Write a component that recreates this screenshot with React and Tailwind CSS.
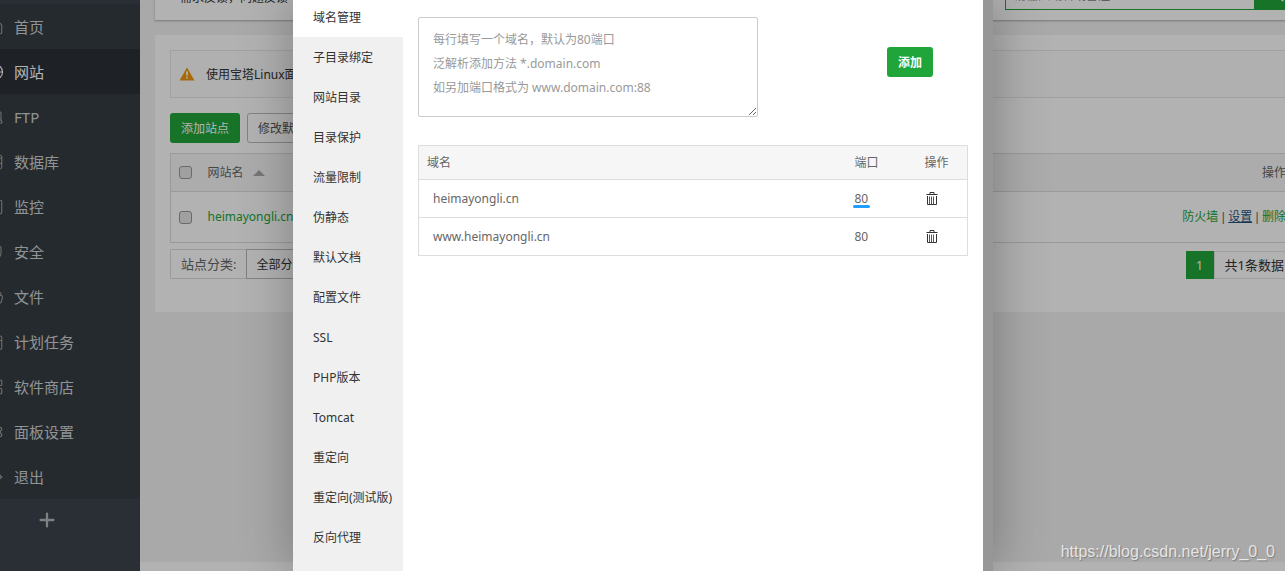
import { House, Globe, Laptop, Database, SquareActivity, Shield, FolderOpen, CalendarDays, LayoutGrid, Settings, LogOut, Plus, Search } from "lucide-react";

const NAV = [
  ["首页", House],
  ["网站", Globe],
  ["FTP", Laptop],
  ["数据库", Database],
  ["监控", SquareActivity],
  ["安全", Shield],
  ["文件", FolderOpen],
  ["计划任务", CalendarDays],
  ["软件商店", LayoutGrid],
  ["面板设置", Settings],
  ["退出", LogOut],
];

const TABS = ["域名管理", "子目录绑定", "网站目录", "目录保护", "流量限制", "伪静态", "默认文档", "配置文件", "SSL", "PHP版本", "Tomcat", "重定向", "重定向(测试版)", "反向代理"];

const DOMAINS = [
  { name: "heimayongli.cn", port: "80", marked: true },
  { name: "www.heimayongli.cn", port: "80", marked: false },
];

function TrashIcon() {
  return (
    <svg width="12" height="14" viewBox="0 0 12 14" fill="none" aria-hidden="true">
      <path d="M4 2.5V.5h4v2M.5 2.5h11M1.5 4v8.5h9V4" stroke="#333" />
      <path d="M3.5 4.5v8M5.5 4.5v8M7.5 4.5v8" stroke="#555" />
    </svg>
  );
}

function WarningIcon() {
  return (
    <svg width="16" height="14" viewBox="0 0 16 14" aria-hidden="true">
      <path d="M8 .5 15.5 13.5H.5z" fill="#f0990f" />
      <path d="M7 4.5h2l-.4 4.5H7.4zM7.2 10h1.6v1.6H7.2z" fill="#fff" />
    </svg>
  );
}

function Divider() {
  return <span className="font-['Liberation_Sans',sans-serif]"> | </span>;
}

function Sidebar() {
  return (
    <aside className="w-[180px] shrink-0 bg-[#3c444d]">
      <div className="h-11" />
      <nav className="bg-[#353d44]">
        {NAV.map(([label, Icon]) => (
          <a
            key={label}
            href="#"
            className={`flex h-[45px] items-center gap-[10px] pl-[26px] text-[15px] ${label === "网站" ? "bg-[#2c3138] text-white" : "text-[#d0d3d6]"}`}
          >
            <Icon size={18} strokeWidth={1.5} className={label === "网站" ? "" : "text-[#9a9da0]"} />
            {label}
          </a>
        ))}
      </nav>
      <button type="button" aria-label="添加菜单" className="flex h-[42px] w-full items-center pl-[76px] text-[#b5b8bb]">
        <Plus size={22} strokeWidth={2.5} />
      </button>
    </aside>
  );
}

function SitePanel() {
  return (
    <main className="flex min-w-0 flex-1 flex-col bg-[#f2f2f2]">
      <div className="mx-[15px] flex h-[60px] items-end justify-between bg-white pb-[10px] pl-[25px] shadow-[0_1px_2px_rgba(0,0,0,0.3)]">
        <p className="pb-1 leading-4">需求反馈，问题反馈</p>
        <form className="flex h-8 w-[305px]">
          <input aria-label="搜索" placeholder="请输入域名或备注" className="w-[250px] border border-[#20a53a] bg-white px-2 pt-1 placeholder:text-[#888]" />
          <button type="button" aria-label="搜索" className="flex flex-1 items-center bg-[#20a53a] pl-3 text-white">
            <Search size={18} />
          </button>
        </form>
      </div>
      <section className="m-[15px] h-[277px] bg-white p-[15px]">
        <div className="flex h-12 items-center gap-[11px] border border-[#e8e8e8] bg-[#fcfcfc] px-2">
          <WarningIcon />
          <span className="pt-[2px]">使用宝塔Linux面板创建站点时会自动创建权限</span>
        </div>
        <div className="mt-[15px] flex h-[30px] gap-[7px]">
          <button type="button" className="rounded-[3px] bg-[#20a53a] px-[11px] pt-[2px] text-white">添加站点</button>
          <button type="button" className="rounded-[3px] border border-[#bbb] px-[10px] pt-[2px] text-[#555]">修改默认页</button>
        </div>
        <table className="mt-[10px] w-full border-collapse text-left text-[#666]">
          <thead>
            <tr className="h-[38px] border border-[#ddd] bg-[#f6f6f6]">
              <th className="w-[37px] pl-2 font-normal">
                <input type="checkbox" aria-label="全选" className="block h-[13px] w-[13px] appearance-none rounded-[3px] border border-[#999] bg-[#e6e6e6]" />
              </th>
              <th className="font-normal">
                <span className="flex items-center gap-[9px]">
                  网站名
                  <svg width="12" height="6" viewBox="0 0 12 6" aria-hidden="true"><path d="M6 0l6 6H0z" fill="#aaa" /></svg>
                </span>
              </th>
              <th className="w-[120px] pr-2 text-right font-normal">操作</th>
            </tr>
          </thead>
          <tbody>
            <tr className="h-[51px] border border-[#ddd]">
              <td className="pl-2">
                <input type="checkbox" aria-label="heimayongli.cn" className="block h-[13px] w-[13px] appearance-none rounded-[3px] border border-[#999] bg-[#e6e6e6]" />
              </td>
              <td><a href="#" className="text-[#20a53a]">heimayongli.cn</a></td>
              <td className="pr-2 text-right whitespace-nowrap">
                <a href="#" className="text-[#20a53a]">防火墙</a>
                <Divider />
                <a href="#" className="text-[#23527c] underline">设置</a>
                <Divider />
                <a href="#" className="text-[#20a53a]">删除</a>
              </td>
            </tr>
          </tbody>
        </table>
        <div className="mt-[6px] flex items-start justify-between">
          <div className="flex h-[30px] items-stretch">
            <label htmlFor="category" className="flex items-center border border-r-0 border-[#ddd] px-[10px] text-[13px] text-[#666]">站点分类:</label>
            <select id="category" className="w-[110px] appearance-none border border-[#bbb] bg-white px-[9px] pt-[2px]">
              <option>全部分类</option>
            </select>
          </div>
          <div className="mt-[2px] flex h-7 text-[13px]">
            <span className="flex w-7 items-center justify-center bg-[#20a53a] text-white">1</span>
            <span className="flex items-center border border-[#e4e4e4] px-[10px]">共1条数据</span>
          </div>
        </div>
      </section>
      <footer className="mt-auto h-[9px] bg-white" />
    </main>
  );
}

function SiteDialog() {
  return (
    <div role="dialog" aria-label="站点设置" className="flex w-[700px] bg-[#979797] pr-[10px] shadow-[1px_1px_50px_rgba(0,0,0,0.3)]">
      <div className="-mt-[3px] w-[110px] shrink-0 bg-[#f0f0f0]">
        {TABS.map((tab, i) => (
          <button
            key={tab}
            type="button"
            className={`block h-10 w-full pt-[2px] pl-5 text-left whitespace-nowrap text-[#333] ${i === 0 ? "bg-white" : ""}`}
          >
            {tab}
          </button>
        ))}
      </div>
      <div className="flex-1 bg-white px-[15px] pt-[17px]">
        <div className="flex items-start justify-between pr-[35px]">
          <textarea
            aria-label="域名"
            className="block h-[100px] w-[340px] rounded-[2px] border border-[#ccc] px-[14px] py-[10px] leading-6 placeholder:text-[#999]"
            placeholder={"每行填写一个域名，默认为80端口\n泛解析添加方法 *.domain.com\n如另加端口格式为 www.domain.com:88"}
          />
          <button type="button" className="mt-[30px] h-[30px] w-[46px] rounded-[3px] bg-[#20a53a] pt-[2px] font-bold text-white">添加</button>
        </div>
        <table className="mt-7 w-full table-fixed border-collapse border border-[#ddd] text-left text-[#666]">
          <thead>
            <tr className="h-[34px] bg-[#f6f6f6]">
              <th className="pl-2 font-normal">域名</th>
              <th className="w-[70px] font-normal">端口</th>
              <th className="w-[43px] font-normal">操作</th>
            </tr>
          </thead>
          <tbody>
            {DOMAINS.map((d) => (
              <tr key={d.name} className="h-[38px] border-t border-[#ddd]">
                <td className="pl-[14px]">{d.name}</td>
                <td>
                  <span className="relative inline-block">
                    {d.port}
                    {d.marked && <span className="absolute -inset-x-[2px] bottom-0 h-[3px] rounded-full bg-[#1e9fff]" />}
                  </span>
                </td>
                <td>
                  <button type="button" aria-label={`删除 ${d.name}`} className="block pl-px"><TrashIcon /></button>
                </td>
              </tr>
            ))}
          </tbody>
        </table>
      </div>
    </div>
  );
}

export default function App() {
  return (
    <div className="relative grid min-h-screen overflow-hidden font-['Noto_Sans','Noto_Sans_CJK_SC',sans-serif] text-[12px] leading-[18px] text-[#333]">
      <div className="-mt-10 -mr-10 -ml-10 flex">
        <Sidebar />
        <SitePanel />
      </div>
      <div className="absolute inset-0 flex justify-center bg-black/30 pl-px">
        <SiteDialog />
      </div>
      <p className="absolute right-[10px] bottom-[9px] font-['Liberation_Sans',sans-serif] text-[16px] leading-5 text-white/75 [text-shadow:1px_1px_1px_rgba(0,0,0,0.25)]">
        https://blog.csdn.net/jerry_0_0
      </p>
    </div>
  );
}
